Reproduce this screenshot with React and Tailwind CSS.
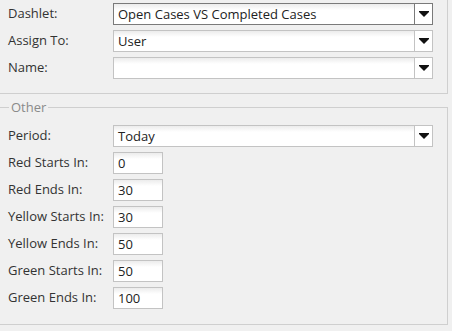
const TOP = [
  { label: "Dashlet:", value: "Open Cases VS Completed Cases", focused: true },
  { label: "Assign To:", value: "User" },
  { label: "Name:", value: "" },
];

const RANGES = [
  { label: "Red Starts In:", value: "0" },
  { label: "Red Ends In:", value: "30" },
  { label: "Yellow Starts In:", value: "30" },
  { label: "Yellow Ends In:", value: "50" },
  { label: "Green Starts In:", value: "50" },
  { label: "Green Ends In:", value: "100" },
];

function Arrow() {
  return (
    <svg width="10" height="6" viewBox="0 0 10 6" className="block">
      <polygon points="0,0 10,0 10,1 5,6 0,1" fill="#111" />
    </svg>
  );
}

function Select({ value, focused }) {
  return (
    <div
      className={`flex h-[22px] w-[320px] border ${
        focused ? "border-[#7a7a7a]" : "border-[#c3c3c3]"
      } bg-gradient-to-b from-[#ececec] via-white via-[30%] to-white`}
    >
      <div className="flex-1 px-[4px] leading-[20px] text-[#222] truncate">{value}</div>
      <div
        className={`w-[18px] flex items-center justify-center border-l ${
          focused ? "border-[#7a7a7a]" : "border-[#c3c3c3]"
        } bg-white`}
      >
        <Arrow />
      </div>
    </div>
  );
}

function NumberBox({ value }) {
  return (
    <div className="h-[22px] w-[50px] border border-[#c3c3c3] bg-gradient-to-b from-[#ececec] via-white via-[30%] to-white px-[4px] leading-[20px] text-[#222]">
      {value}
    </div>
  );
}

function Row({ label, children }) {
  return (
    <div className="flex items-center h-[22px]">
      <div className="w-[105px] text-[#333]">{label}</div>
      {children}
    </div>
  );
}

export default function App() {
  return (
    <div
      className="w-[452px] h-[331px] bg-[#f0f0f0] text-[13px] overflow-hidden"
      style={{ fontFamily: '"Open Sans", "Liberation Sans", sans-serif' }}
    >
      <div className="w-[448px] border-r border-b border-[#cfcfcf] pl-[8px] pt-[3px] pb-[14px] flex flex-col gap-[5px]">
        {TOP.map((r) => (
          <Row key={r.label} label={r.label}>
            <Select value={r.value} focused={r.focused} />
          </Row>
        ))}
      </div>

      <fieldset className="mt-[4px] w-[448px] border-0 border-t border-r border-b border-solid border-[#cfcfcf] pl-[8px] pt-[9px] pb-[15px]">
        <legend className="ml-[1px] px-[2px] leading-[18px] text-[#8a8a8a]">Other</legend>
        <div className="flex flex-col gap-[5px]">
          <Row label="Period:">
            <Select value="Today" />
          </Row>
          {RANGES.map((r) => (
            <Row key={r.label} label={r.label}>
              <NumberBox value={r.value} />
            </Row>
          ))}
        </div>
      </fieldset>
    </div>
  );
}
